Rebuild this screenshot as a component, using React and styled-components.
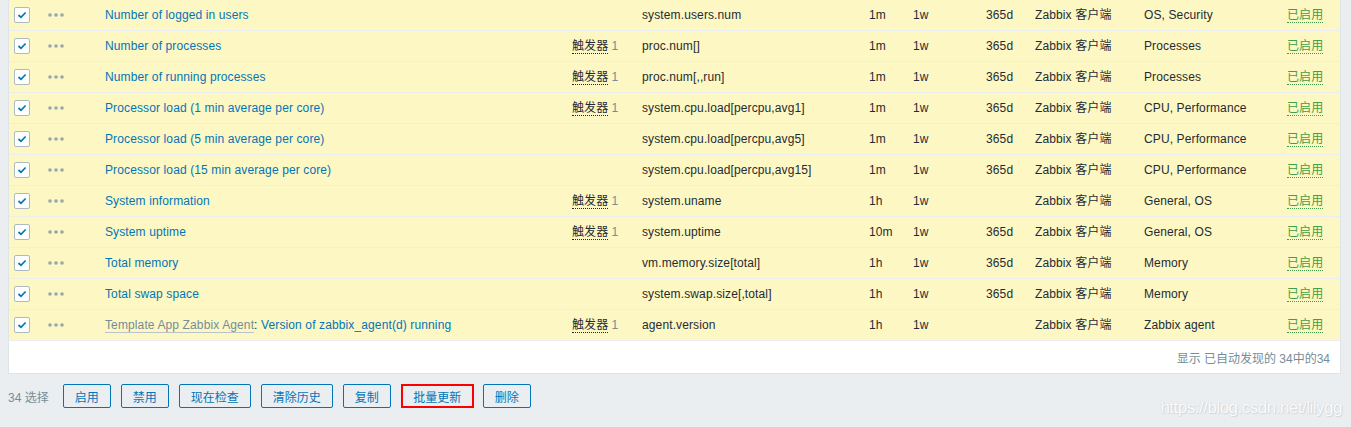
import React from 'react'
import styled, { createGlobalStyle } from 'styled-components'

const GlobalStyle = createGlobalStyle`
    html, body {
        margin: 0;
        padding: 0;
        background: #ebeef0;
        font-family: "Liberation Sans", Arial, "Noto Sans CJK SC", sans-serif;
        font-size: 12px;
        color: #1f2c33;
    }
`

const Page = styled.div`
    position: relative;
    height: 427px;
    padding: 0 10px 0 8px;
    overflow: hidden;
`

const Panel = styled.div`
    background: #fff;
    border: 1px solid #dfe4e7;
    border-top: none;
`

const Table = styled.table`
    width: 100%;
    border-collapse: collapse;
    table-layout: fixed;
`

const Row = styled.tr`
    background: #fdf7c3;
`

const Cell = styled.td`
    height: 30px;
    padding: 0 5px;
    border-bottom: 1px solid #ebeef0;
    white-space: nowrap;
    overflow: hidden;
    vertical-align: middle;
    line-height: 14px;
    letter-spacing: 0.12px;
`

const CheckBox = styled.span`
    display: flex;
    align-items: center;
    justify-content: center;
    box-sizing: border-box;
    width: 16px;
    height: 16px;
    background: #fff;
    border: 1px solid #acbbc2;
    border-radius: 2px;
`

const Link = styled.a`
    color: #0275b8;
    text-decoration: none;
`

const TemplateLink = styled.a`
    color: #768d99;
    text-decoration: none;
    border-bottom: 1px solid #b8c4ca;
`

const Hint = styled.span`
    border-bottom: 1px dotted #1f2c33;
`

const Count = styled.span`
    color: #768d99;
    margin-left: 3px;
`

const Status = styled.span`
    color: #429e47;
    border-bottom: 1px dotted #429e47;
`

const Footer = styled.div`
    height: 32px;
    display: flex;
    align-items: center;
    justify-content: flex-end;
    padding-right: 10px;
    color: #768d99;
`

const ActionBar = styled.div`
    display: flex;
    align-items: center;
    margin-top: 10px;
`

const Selected = styled.span`
    color: #768d99;
    margin-right: 14px;
`

const Button = styled.button`
    box-sizing: border-box;
    height: 24px;
    padding: ${ props => props.highlighted ? '0' : '0 11px' };
    margin-right: ${ props => props.highlighted ? '9px' : '10px' };
    background: transparent;
    color: #0275b8;
    border: ${ props => props.highlighted ? '2px solid #f00' : '1px solid #0275b8' };
    border-radius: ${ props => props.highlighted ? '0' : '2px' };
    width: ${ props => props.highlighted ? '73px' : 'auto' };
    white-space: nowrap;
    font-family: "Liberation Sans", Arial, "Noto Sans CJK SC", sans-serif;
    font-size: 12px;
    cursor: pointer;
`

const Watermark = styled.div`
    position: absolute;
    right: 9px;
    bottom: 9px;
    font-size: 17px;
    color: #fafbfc;
    text-shadow: 0 0 1px #c9cfd3, 1px 1px 1px #d2d7da;
    letter-spacing: -0.5px;
`

const Check = () => (
    <CheckBox>
        <svg width="10" height="8" viewBox="0 0 10 8">
            <path d="M1.5 4 L4 6.3 L8.6 1.5" fill="none" stroke="#0275b8" strokeWidth="1.7" />
        </svg>
    </CheckBox>
)

const Dots = () => (
    <svg width="16" height="4" viewBox="0 0 16 4" style={{ display: 'block' }}>
        <circle cx="2" cy="2" r="1.8" fill="#98a6ae" />
        <circle cx="8" cy="2" r="1.8" fill="#98a6ae" />
        <circle cx="14" cy="2" r="1.8" fill="#98a6ae" />
    </svg>
)

const widths = [34, 57, 467, 70, 227, 44, 73, 49, 109, 143, 58]

const items = [
    { name: 'Number of logged in users', trig: false, key: 'system.users.num', interval: '1m', trends: '365d', apps: 'OS, Security' },
    { name: 'Number of processes', trig: true, key: 'proc.num[]', interval: '1m', trends: '365d', apps: 'Processes' },
    { name: 'Number of running processes', trig: true, key: 'proc.num[,,run]', interval: '1m', trends: '365d', apps: 'Processes' },
    { name: 'Processor load (1 min average per core)', trig: true, key: 'system.cpu.load[percpu,avg1]', interval: '1m', trends: '365d', apps: 'CPU, Performance' },
    { name: 'Processor load (5 min average per core)', trig: false, key: 'system.cpu.load[percpu,avg5]', interval: '1m', trends: '365d', apps: 'CPU, Performance' },
    { name: 'Processor load (15 min average per core)', trig: false, key: 'system.cpu.load[percpu,avg15]', interval: '1m', trends: '365d', apps: 'CPU, Performance' },
    { name: 'System information', trig: true, key: 'system.uname', interval: '1h', trends: '', apps: 'General, OS' },
    { name: 'System uptime', trig: true, key: 'system.uptime', interval: '10m', trends: '365d', apps: 'General, OS' },
    { name: 'Total memory', trig: false, key: 'vm.memory.size[total]', interval: '1h', trends: '365d', apps: 'Memory' },
    { name: 'Total swap space', trig: false, key: 'system.swap.size[,total]', interval: '1h', trends: '365d', apps: 'Memory' },
    { name: 'Version of zabbix_agent(d) running', template: 'Template App Zabbix Agent', trig: true, key: 'agent.version', interval: '1h', trends: '', apps: 'Zabbix agent' },
]

const actions = ['启用', '禁用', '现在检查', '清除历史', '复制', '批量更新', '删除']

const App = () => (
    <Page>
        <GlobalStyle />
        <Panel>
            <Table>
                <colgroup>
                    { widths.map((w, i) => <col key={ i } style={{ width: w }} />) }
                </colgroup>
                <tbody>
                    {
                        items.map(item => (
                            <Row key={ item.key }>
                                <Cell><Check /></Cell>
                                <Cell><Dots /></Cell>
                                <Cell>
                                    { item.template && <><TemplateLink>{ item.template }</TemplateLink>: </> }
                                    <Link>{ item.name }</Link>
                                </Cell>
                                <Cell>{ item.trig && <><Hint>触发器</Hint><Count>1</Count></> }</Cell>
                                <Cell>{ item.key }</Cell>
                                <Cell>{ item.interval }</Cell>
                                <Cell>1w</Cell>
                                <Cell>{ item.trends }</Cell>
                                <Cell>Zabbix 客户端</Cell>
                                <Cell>{ item.apps }</Cell>
                                <Cell><Status>已启用</Status></Cell>
                            </Row>
                        ))
                    }
                </tbody>
            </Table>
            <Footer>显示 已自动发现的 34中的34</Footer>
        </Panel>
        <ActionBar>
            <Selected>34 选择</Selected>
            { actions.map(a => <Button key={ a } highlighted={ a === '批量更新' }>{ a }</Button>) }
        </ActionBar>
        <Watermark>https://blog.csdn.net/lilygg</Watermark>
    </Page>
)

export default App
